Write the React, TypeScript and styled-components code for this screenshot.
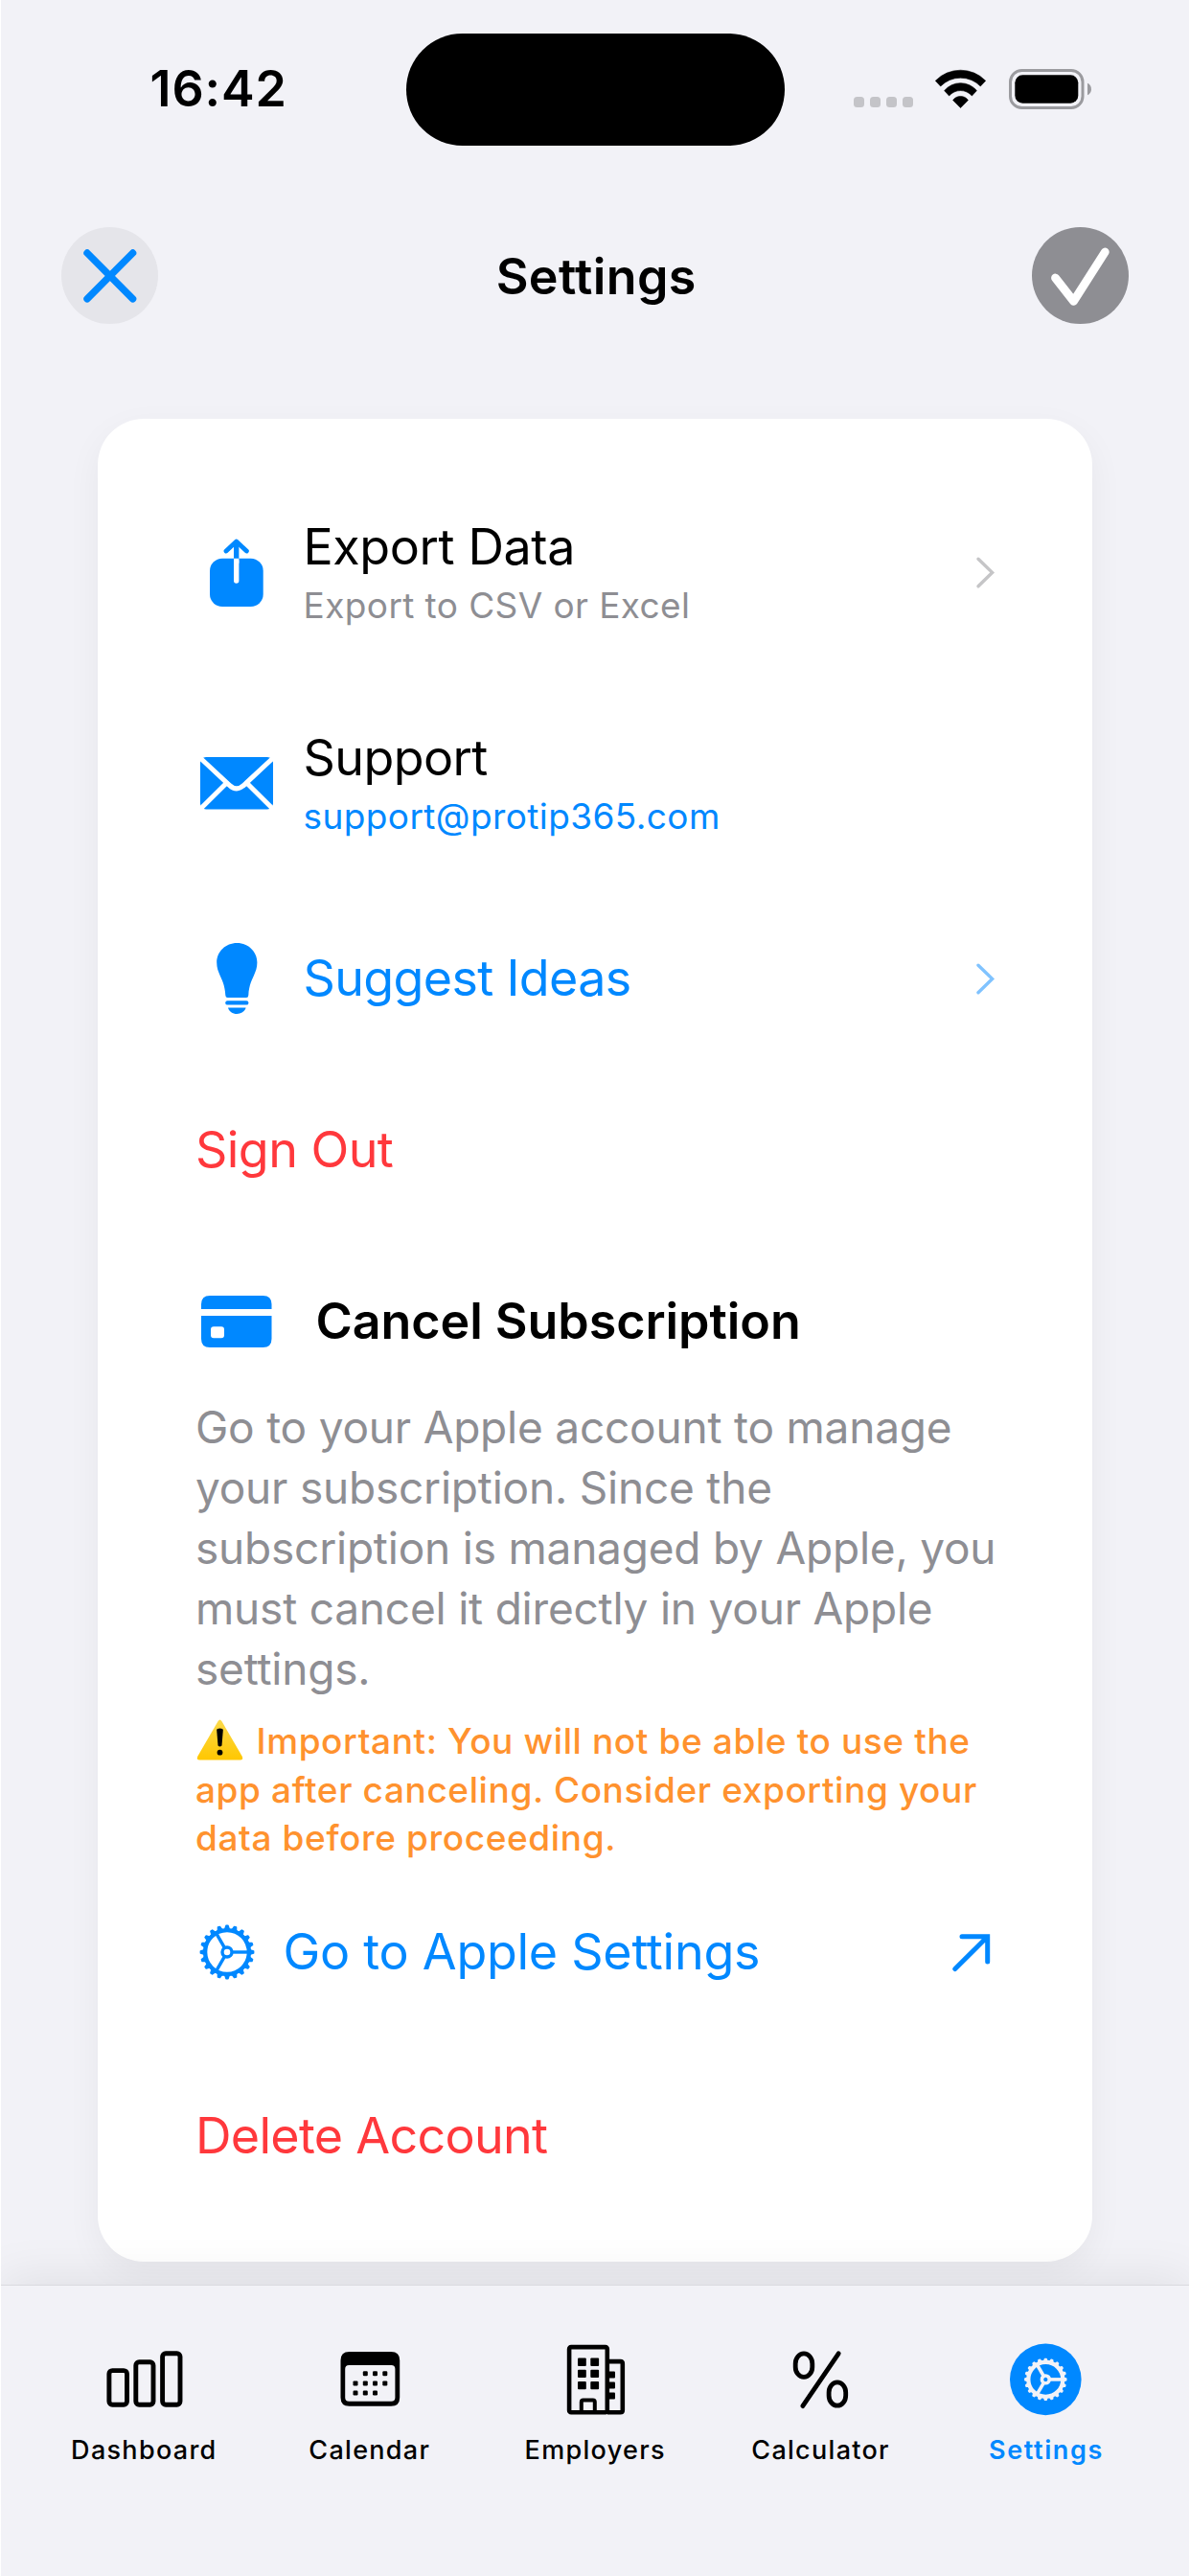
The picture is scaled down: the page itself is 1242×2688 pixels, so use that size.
import React from "react";
import styled, { createGlobalStyle } from "styled-components";

const BLUE = "#0088ff";
const RED = "#ff383c";
const GRAY = "#8e8e93";
const ORANGE = "#ff922e";
const SURFACE = "#f2f2f7";

const GlobalStyle = createGlobalStyle`
  html, body { margin: 0; padding: 0; background: ${SURFACE}; }
  * { box-sizing: border-box; }
  svg { display: block; flex: none; overflow: visible; }
  button { appearance: none; border: 0; margin: 0; padding: 0; background: none; font: inherit; color: inherit; text-align: left; }
`;

const Screen = styled.div`
  display: flex;
  flex-direction: column;
  width: 1242px;
  height: 2688px;
  overflow: hidden;
  border-left: 1px solid #fff;
  border-right: 1px solid #fff;
  background: ${SURFACE};
  color: #000;
  font-family: "Inter", "Liberation Sans", sans-serif;
  font-size: 52px;
  line-height: 62px;
  white-space: nowrap;
`;

/* Status bar */

const StatusBar = styled.header`
  display: grid;
  grid-template-columns: 422.5px 395px 1fr;
  align-items: center;
  flex: none;
  height: 187px;
`;

const Clock = styled.time`
  padding: 0 0 2px 155.5px;
  font-weight: 600;
  letter-spacing: 0.9px;
`;

const Island = styled.div`
  height: 117px;
  border-radius: 59px;
  background: #000;
`;

const StatusIcons = styled.div`
  display: flex;
  align-items: center;
  padding: 0 0 2px 72.5px;
`;

const SignalDots = styled.div`
  display: flex;
  gap: 6px;
  margin: 28px 23px 0 0;
`;

const SignalDot = styled.span`
  width: 11px;
  height: 11px;
  border-radius: 3.5px;
  background: #c4c4c8;
`;

const WifiSlot = styled.div`
  margin-right: 23.5px;
`;

/* Navigation header */

const NavBar = styled.nav`
  display: flex;
  align-items: center;
  justify-content: space-between;
  flex: none;
  height: 101px;
  margin: 49.5px 62.5px 0 63px;
`;

const RoundButton = styled.button<{ $fill: string }>`
  width: 101px;
  height: 101px;
  border-radius: 50%;
  background: ${(p) => p.$fill};
`;

const NavTitle = styled.h1`
  margin: 0;
  padding: 3px 0 0 2px;
  font-size: 52px;
  font-weight: 600;
  letter-spacing: 0.37px;
`;

/* Settings card */

const Card = styled.main`
  display: flex;
  flex-direction: column;
  flex: none;
  height: 1923px;
  margin: 99.5px 101px 0;
  padding: 103px 102px 0;
  border-radius: 48px;
  background: #fff;
  box-shadow: 0 12px 36px rgba(0, 0, 0, 0.05);
`;

const Row = styled.button<{ $top?: number; $gap?: number; $end?: number; $color?: string }>`
  display: flex;
  align-items: center;
  gap: ${(p) => p.$gap ?? 26.5}px;
  width: 100%;
  margin-top: ${(p) => p.$top ?? 0}px;
  padding-right: ${(p) => p.$end ?? 0}px;
  color: ${(p) => p.$color ?? "#000"};
`;

const IconSlot = styled.span<{ $width?: number }>`
  display: flex;
  justify-content: center;
  flex: none;
  width: ${(p) => p.$width ?? 86}px;
`;

const RowText = styled.span`
  display: flex;
  flex-direction: column;
  flex: 1;
  gap: 8px;
`;

const Label = styled.span<{ $tracking?: number; $bold?: boolean }>`
  font-weight: ${(p) => (p.$bold ? 600 : 400)};
  letter-spacing: ${(p) => p.$tracking ?? 0}px;
`;

const Caption = styled.span<{ $color?: string }>`
  color: ${(p) => p.$color ?? GRAY};
  font-size: 37px;
  line-height: 44px;
  letter-spacing: 0.4px;
`;

const Body = styled.p`
  margin: 48px -10px 0 0;
  color: ${GRAY};
  font-size: 46px;
  line-height: 63px;
  letter-spacing: -0.21px;
  white-space: normal;
`;

const Warning = styled.p`
  margin: 19px 0 0;
  color: ${ORANGE};
  font-size: 37px;
  font-weight: 500;
  line-height: 50.5px;
  letter-spacing: 0.61px;
  white-space: normal;

  svg {
    display: inline-block;
    margin: 0 3px 0 1px;
    vertical-align: -7px;
  }
`;

/* Tab bar */

const TabBar = styled.footer`
  display: flex;
  flex: 1;
  margin-top: 24px;
  padding: 60px 32px 0 31px;
  border-top: 1px solid #dadadf;
  background: ${SURFACE};
  box-shadow: 0 -6px 48px rgba(0, 0, 0, 0.08);
`;

const Tab = styled.button<{ $active?: boolean }>`
  display: flex;
  flex: 1;
  flex-direction: column;
  align-items: center;
  justify-content: flex-start;
  gap: 19px;
  color: ${(p) => (p.$active ? BLUE : "#000")};
`;

const TabLabel = styled.span<{ $active?: boolean }>`
  padding-left: 1.3px;
  font-size: 27px;
  font-weight: ${(p) => (p.$active ? 600 : 500)};
  line-height: 33px;
  letter-spacing: ${(p) => (p.$active ? 1.6 : 1.3)}px;
`;

/* Drawings */

const WifiIcon = () => (
  <svg width="53" height="40" viewBox="0 0 53 40" stroke="#000" strokeWidth="0.6" strokeLinejoin="round">
    <path d="M0.3 11.3A36.5 36.5 0 0 1 52.7 11.3L47.3 17A29 29 0 0 0 5.7 17Z" />
    <path d="M9.6 21.6A22 22 0 0 1 43.4 21.6L38.4 27A15.7 15.7 0 0 0 14.6 27Z" />
    <path d="M18.6 31.6A9.6 9.6 0 0 1 34.4 31.6L26.5 39.6Z" />
  </svg>
);

const BatteryIcon = () => (
  <svg width="87" height="42" viewBox="0 0 87 42">
    <rect x="1.5" y="1.5" width="75.5" height="39" rx="12" fill="none" stroke="#9b9b9f" strokeWidth="3" />
    <rect x="6.3" y="6.3" width="66" height="29.4" rx="8" fill="#000" />
    <path d="M82 14.7C87.3 16.6 87.3 25.4 82 27.3Z" fill="#9b9b9f" />
  </svg>
);

const CloseIcon = () => (
  <svg width="101" height="101" viewBox="0 0 101 101" stroke={BLUE} strokeWidth="7.4" strokeLinecap="round">
    <path d="M27 27L74.6 74.8M74.6 27L27 74.8" />
  </svg>
);

const CheckIcon = () => (
  <svg width="101" height="101" viewBox="0 0 101 101" fill="none" stroke="#fff" strokeWidth="8.8" strokeLinecap="round" strokeLinejoin="round">
    <path d="M24.5 53L43.5 77.3L76.3 26" />
  </svg>
);

const ExportIcon = () => (
  <svg width="56" height="71" viewBox="0 0 56 71" fill="none" strokeWidth="5.4" strokeLinecap="round" strokeLinejoin="round">
    <rect y="20.7" width="55.7" height="50.3" rx="13" fill={BLUE} />
    <path d="M27.7 23.4V44" stroke="#fff" />
    <rect x="25" y="20.7" width="5.4" height="5" fill="#fff" />
    <path d="M27.7 3.5V20.7" stroke={BLUE} strokeLinecap="butt" />
    <path d="M17 13L27.7 3L38.4 13" stroke={BLUE} strokeWidth="4.8" />
  </svg>
);

const MailIcon = () => (
  <svg width="76" height="55" viewBox="0 0 76 55" fill="none">
    <rect width="76" height="54.6" rx="6" fill={BLUE} />
    <path d="M-1 0L30.5 29.3Q38 36.3 45.5 29.3L77 0M-1 55.3L26.5 28M77 55.3L49.5 28" stroke="#fff" strokeWidth="5" />
  </svg>
);

const BulbIcon = () => (
  <svg width="43" height="74" viewBox="0 0 43 74" fill={BLUE}>
    <path d="M21.3 0C33 0 42.4 9 42.4 20.3C42.4 33 34.2 37 33.3 54.5Q33.2 57 31 57H11.6Q9.4 57 9.3 54.5C8.4 37 0.2 33 0.2 20.3C0.2 9 9.6 0 21.3 0Z" />
    <rect x="9.2" y="60.2" width="24.2" height="4.4" rx="2.2" />
    <path d="M12 67.5H30.6C29.5 71.5 26 74 21.3 74C16.6 74 13.1 71.5 12 67.5Z" />
  </svg>
);

const CreditCardIcon = () => (
  <svg width="74" height="54" viewBox="0 0 74 54" fill={BLUE}>
    <path d="M0 14V9Q0 0 9 0H64.5Q73.5 0 73.5 9V14Z" />
    <path
      fillRule="evenodd"
      d="M0 21H73.5V45Q73.5 54 64.5 54H9Q0 54 0 45ZM13 32.3Q10 32.3 10 35.3V41.3Q10 44.3 13 44.3H21Q24 44.3 24 41.3V35.3Q24 32.3 21 32.3Z"
    />
  </svg>
);

const Chevron = ({ color }: { color: string }) => (
  <svg width="18" height="33" viewBox="0 0 18 33" fill="none" stroke={color} strokeWidth="3.4" strokeLinecap="round">
    <path d="M1 2.2L15.6 16.4L1 30.8" />
  </svg>
);

const ArrowOutIcon = () => (
  <svg width="40" height="39" viewBox="0 0 40 39" fill="none" stroke={BLUE} strokeWidth="5" strokeLinecap="round" strokeLinejoin="miter">
    <path d="M2.8 36.5L36.5 3M10 2.8H36.7V29" />
  </svg>
);

const WarningIcon = () => (
  <svg width="49" height="43" viewBox="0 0 49 43">
    <defs>
      <linearGradient id="warning-fill" x1="0" y1="0" x2="0" y2="1">
        <stop offset="0" stopColor="#fbd94b" />
        <stop offset="1" stopColor="#ffc700" />
      </linearGradient>
    </defs>
    <path d="M22.6 2Q24.5 -1 26.4 2L47.6 38.5Q49.6 42.4 45.5 42.6H3.5Q-0.6 42.4 1.4 38.5Z" fill="url(#warning-fill)" />
    <path d="M21.2 11.5Q21.2 9.6 24.5 9.6T27.8 11.5L26.5 27.5Q24.5 29.3 22.5 27.5Z" fill="#000" />
    <circle cx="24.5" cy="34.7" r="2.9" fill="#000" />
  </svg>
);

type GearProps = {
  cx: number;
  cy: number;
  radius: number;
  color: string;
  ring: number;
  spoke: number;
  tooth: number;
  hub: number;
};

const TEETH = Array.from({ length: 20 }, (_, i) => i * 18);

const Gear = ({ cx, cy, radius, color, ring, spoke, tooth, hub }: GearProps) => {
  const ringRadius = radius * 0.795;
  return (
    <g transform={`translate(${cx} ${cy})`} fill="none" stroke={color}>
      <circle r={ringRadius} strokeWidth={ring} />
      <circle r={hub} strokeWidth={spoke} />
      {TEETH.map((a) => (
        <path
          key={a}
          transform={`rotate(${a})`}
          d={`M${ringRadius} ${-tooth * 0.75}L${radius - 1.2} ${-tooth * 0.3}V${tooth * 0.3}L${ringRadius} ${tooth * 0.75}Z`}
          fill={color}
          strokeWidth="1.6"
          strokeLinejoin="round"
        />
      ))}
      {[0, 120, 240].map((a) => (
        <path key={a} transform={`rotate(${a})`} d={`M${hub} 0H${ringRadius}`} strokeWidth={spoke} />
      ))}
    </g>
  );
};

const GearIcon = () => (
  <svg width="58" height="58" viewBox="0 0 58 58">
    <Gear cx={29} cy={29} radius={28.8} color={BLUE} ring={4.4} spoke={3.4} tooth={3.4} hub={5} />
  </svg>
);

const TabIcon = ({ children }: { children: React.ReactNode }) => (
  <svg width="90" height="76" viewBox="0 0 90 76">
    {children}
  </svg>
);

const BarsIcon = () => (
  <TabIcon>
    <g fill="none" stroke="#000" strokeWidth="4.9">
      <rect x="8.9" y="28.6" width="18.6" height="35.6" rx="3.4" />
      <rect x="36.8" y="19.8" width="18.2" height="44.4" rx="3.4" />
      <rect x="64.6" y="10.7" width="18.4" height="53.5" rx="3.4" />
    </g>
  </TabIcon>
);

const CALENDAR_DOTS = [
  [41.3, 31.7], [51.5, 31.7], [61.8, 31.7],
  [31, 41.9], [41.3, 41.9], [51.5, 41.9], [61.8, 41.9],
  [31, 52], [41.3, 52], [51.5, 52],
];

const CalendarIcon = () => (
  <TabIcon>
    <path
      fillRule="evenodd"
      d="M24.5 9H68.2Q77.2 9 77.2 18V56.7Q77.2 65.7 68.2 65.7H24.5Q15.5 65.7 15.5 56.7V18Q15.5 9 24.5 9ZM24.2 23Q20.2 23 20.2 27V56.8Q20.2 60.8 24.2 60.8H68.4Q72.4 60.8 72.4 56.8V27Q72.4 23 68.4 23Z"
    />
    {CALENDAR_DOTS.map(([x, y]) => (
      <rect key={`${x}-${y}`} x={x - 2.5} y={y - 2.5} width="5" height="5" rx="1.2" />
    ))}
  </TabIcon>
);

const BuildingIcon = () => (
  <TabIcon>
    <g fill="none" stroke="#000" strokeWidth="4.6" strokeLinejoin="round">
      <rect x="18.1" y="4.1" width="39.7" height="68.2" rx="2" />
      <path d="M60 19.1H71.5Q73.8 19.1 73.8 21.4V70Q73.8 72.3 71.5 72.3H58" />
      <path d="M30.8 72V61.5Q30.8 59.5 32.8 59.5H42.8Q44.8 59.5 44.8 61.5V72" strokeWidth="4" />
    </g>
    {[15.5, 27.7, 39.9].map((y) => (
      <g key={y}>
        <rect x="27" y={y} width="8.8" height="8.4" rx="1" />
        <rect x="40.3" y={y} width="8.8" height="8.4" rx="1" />
      </g>
    ))}
    {[29.5, 40.4, 51.6].map((y) => (
      <rect key={y} x="59" y={y} width="7" height="7" rx="1" />
    ))}
  </TabIcon>
);

const PercentIcon = () => (
  <TabIcon>
    <g fill="none" stroke="#000" strokeWidth="4.8" strokeLinecap="round">
      <rect x="19.2" y="10.9" width="17.6" height="24.5" rx="8.8" ry="10.5" />
      <rect x="54.1" y="40.9" width="17.6" height="24.3" rx="8.8" ry="10.5" />
      <path d="M64.2 10.8L26.8 65.6" />
    </g>
  </TabIcon>
);

const SettingsIcon = () => (
  <TabIcon>
    <circle cx="45.3" cy="37.9" r="37.3" fill={BLUE} />
    <Gear cx={45.3} cy={37.9} radius={22.6} color={SURFACE} ring={4.2} spoke={3.6} tooth={2.6} hub={3.9} />
  </TabIcon>
);

const TABS = [
  { label: "Dashboard", icon: <BarsIcon /> },
  { label: "Calendar", icon: <CalendarIcon /> },
  { label: "Employers", icon: <BuildingIcon /> },
  { label: "Calculator", icon: <PercentIcon /> },
  { label: "Settings", icon: <SettingsIcon />, active: true },
];

export default function App() {
  return (
    <>
      <GlobalStyle />
      <Screen>
        <StatusBar>
          <Clock>16:42</Clock>
          <Island />
          <StatusIcons>
            <SignalDots>
              <SignalDot />
              <SignalDot />
              <SignalDot />
              <SignalDot />
            </SignalDots>
            <WifiSlot>
              <WifiIcon />
            </WifiSlot>
            <BatteryIcon />
          </StatusIcons>
        </StatusBar>

        <NavBar>
          <RoundButton $fill="#e5e5ea" aria-label="Close">
            <CloseIcon />
          </RoundButton>
          <NavTitle>Settings</NavTitle>
          <RoundButton $fill={GRAY} aria-label="Save">
            <CheckIcon />
          </RoundButton>
        </NavBar>

        <Card>
          <Row>
            <IconSlot>
              <ExportIcon />
            </IconSlot>
            <RowText>
              <Label $tracking={-0.4}>Export Data</Label>
              <Caption>Export to CSV or Excel</Caption>
            </RowText>
            <Chevron color="#c5c5c7" />
          </Row>

          <Row $top={106}>
            <IconSlot>
              <MailIcon />
            </IconSlot>
            <RowText>
              <Label $tracking={-0.6}>Support</Label>
              <Caption $color={BLUE}>support@protip365.com</Caption>
            </RowText>
          </Row>

          <Row $top={110} $color={BLUE}>
            <IconSlot>
              <BulbIcon />
            </IconSlot>
            <RowText>
              <Label $tracking={-0.66}>Suggest Ideas</Label>
            </RowText>
            <Chevron color="#80c3ff" />
          </Row>

          <Row $top={111} $color={RED}>
            <Label $tracking={-0.55}>Sign Out</Label>
          </Row>

          <Row $top={117} $gap={39.5}>
            <IconSlot>
              <CreditCardIcon />
            </IconSlot>
            <Label $bold $tracking={-0.06}>
              Cancel Subscription
            </Label>
          </Row>

          <Body>
            Go to your Apple account to manage your subscription. Since the subscription is managed by Apple, you must
            cancel it directly in your Apple settings.
          </Body>
          <Warning>
            <WarningIcon /> Important: You will not be able to use the app after canceling. Consider exporting your data
            before proceeding.
          </Warning>

          <Row $top={62.5} $gap={26.5} $end={4.5} $color={BLUE}>
            <IconSlot $width={65}>
              <GearIcon />
            </IconSlot>
            <RowText>
              <Label $tracking={-0.27}>Go to Apple Settings</Label>
            </RowText>
            <ArrowOutIcon />
          </Row>

          <Row $top={130} $color={RED}>
            <Label $tracking={-0.7}>Delete Account</Label>
          </Row>
        </Card>

        <TabBar>
          {TABS.map((tab) => (
            <Tab key={tab.label} $active={tab.active}>
              {tab.icon}
              <TabLabel $active={tab.active}>{tab.label}</TabLabel>
            </Tab>
          ))}
        </TabBar>
      </Screen>
    </>
  );
}
